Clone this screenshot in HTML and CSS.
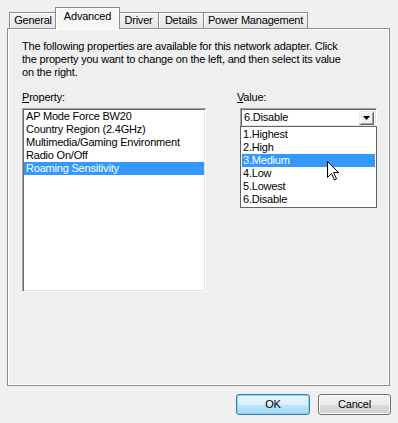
FILE: index.html
```html
<!DOCTYPE html>
<html>
<head>
<meta charset="utf-8">
<link rel="stylesheet" href="styles.css">
</head>
<body>
<div class="dialog">
  <div class="tabs">
    <div class="tab t-general">General</div>
    <div class="tab active t-advanced">Advanced</div>
    <div class="tab t-driver">Driver</div>
    <div class="tab t-details">Details</div>
    <div class="tab t-power">Power Management</div>
  </div>
  <div class="panel">
    <p class="desc">The following properties are available for this network adapter. Click<br>the property you want to change on the left, and then select its value<br>on the right.</p>
    <div class="columns">
      <div class="col-left">
        <div class="label"><u>P</u>roperty:</div>
        <div class="listbox">
          <div class="item">AP Mode Force BW20</div>
          <div class="item">Country Region (2.4GHz)</div>
          <div class="item">Multimedia/Gaming Environment</div>
          <div class="item">Radio On/Off</div>
          <div class="item selected">Roaming Sensitivity</div>
        </div>
      </div>
      <div class="col-right">
        <div class="label"><u>V</u>alue:</div>
        <div class="combo">
          <div class="combo-text">6.Disable</div>
          <div class="combo-btn">
            <svg width="7" height="4" viewBox="0 0 7 4"><path d="M0 0H7L3.5 4Z" fill="#000"/></svg>
          </div>
          <div class="dropdown">
            <div class="ditem">1.Highest</div>
            <div class="ditem">2.High</div>
            <div class="ditem selected">3.Medium</div>
            <div class="ditem">4.Low</div>
            <div class="ditem">5.Lowest</div>
            <div class="ditem">6.Disable</div>
          </div>
          <svg class="cursor" width="13" height="20" viewBox="0 0 13 20"><path d="M0.5 0.5V16.5L4.5 12.5L7.5 19L9.5 18L6.6 11.5H11.5Z" fill="#fff" stroke="#000" stroke-width="1" stroke-linejoin="miter"/></svg>
        </div>
      </div>
    </div>
  </div>
  <div class="buttons">
    <div class="btn default">OK</div>
    <div class="btn">Cancel</div>
  </div>
</div>
</body>
</html>
```
FILE: styles.css
```css
html, body {
  margin: 0;
  padding: 0;
  background: #f0f0f0;
}
body {
  font-family: "Liberation Sans", Arial, sans-serif;
  font-size: 11px;
  letter-spacing: -0.2px;
  color: #000;
  width: 398px;
  height: 423px;
  overflow: hidden;
}
.dialog {
  padding: 7px 8px 0 7px;
}
.tabs {
  display: flex;
  align-items: flex-end;
  height: 21px;
  padding-left: 2px;
}
.tab {
  box-sizing: border-box;
  height: 16px;
  border: 1px solid #898c95;
  border-bottom: none;
  margin-right: -1px;
  text-align: center;
  line-height: 15px;
  background: linear-gradient(#f4f4f4, #e6e6e6);
  box-shadow: inset 1px 1px 0 #fff;
  white-space: nowrap;
}
.t-general { width: 48px; }
.t-advanced { width: 65px; }
.t-driver { width: 41px; }
.t-details { width: 46px; }
.t-power { width: 105px; }
.tab.active {
  height: 22px;
  margin-bottom: -1px;
  margin-left: -1px;
  margin-right: -2px;
  position: relative;
  z-index: 1;
  background: #f6f6f6;
  line-height: 16px;
  box-shadow: inset 1px 1px 0 #fff;
}
.panel {
  box-sizing: border-box;
  height: 358px;
  width: 383px;
  border: 1px solid #898c95;
  box-shadow: inset 1px 1px 0 #fff, inset -1px -1px 0 #fff;
  background: #efefef;
  padding: 11px 10px 0 14px;
}
.desc {
  margin: 0;
  line-height: 13px;
  width: 355px;
  white-space: nowrap;
}
.columns {
  display: flex;
  margin-top: 12px;
}
.col-left {
  width: 184px;
}
.col-right {
  margin-left: 31px;
  width: 140px;
}
.label {
  line-height: 13px;
  height: 17px;
}
.listbox {
  box-sizing: border-box;
  height: 184px;
  border: 1px solid;
  border-color: #a0a0a0 #ffffff #ffffff #a0a0a0;
  box-shadow: inset 1px 1px 0 #696969, inset -1px -1px 0 #e3e3e3;
  background: #fff;
  padding: 1px 1px;
}
.item {
  height: 13px;
  line-height: 13px;
  padding-left: 2px;
  white-space: nowrap;
}
.selected {
  background: #3399ff;
  color: #fff;
}
.combo {
  position: relative;
  box-sizing: border-box;
  margin-left: 3px;
  width: 137px;
  height: 19px;
  border: 1px solid;
  border-color: #a0a0a0 #ffffff #ffffff #a0a0a0;
  box-shadow: inset 1px 1px 0 #696969, inset -1px -1px 0 #e3e3e3;
  background: #fff;
  display: flex;
  align-items: center;
  padding: 0 2px 0 3px;
}
.combo-text {
  flex: 1;
  line-height: 13px;
}
.combo-btn {
  box-sizing: border-box;
  width: 15px;
  height: 14px;
  border: 1px solid;
  border-color: #f0f0f0 #696969 #696969 #f0f0f0;
  box-shadow: inset 1px 1px 0 #fff, inset -1px -1px 0 #a0a0a0;
  background: #f0f0f0;
  display: flex;
  align-items: center;
  justify-content: center;
  margin-top: 1px;
}
.dropdown {
  position: absolute;
  left: -1px;
  top: 17px;
  width: 137px;
  box-sizing: border-box;
  border: 1px solid #646464;
  background: #fff;
  padding: 1px 1px;
  z-index: 2;
}
.ditem {
  height: 13px;
  line-height: 13px;
  padding-left: 1px;
}
.cursor {
  position: absolute;
  left: 86px;
  top: 52px;
  z-index: 3;
}
.buttons {
  display: flex;
  justify-content: flex-end;
  gap: 8px;
  margin-top: 8px;
  padding-right: 0;
  width: 384px;
}
.btn {
  box-sizing: border-box;
  width: 73px;
  height: 21px;
  border: 1px solid #707070;
  border-radius: 3px;
  background: linear-gradient(#f2f2f2 0%, #ebebeb 50%, #dddddd 50%, #cfcfcf 100%);
  box-shadow: inset 0 0 0 1px #fcfcfc;
  text-align: center;
  line-height: 19px;
}
.btn.default {
  width: 74px;
  border-color: #3c7fb1;
  background: linear-gradient(#eaf6fd 0%, #d9f0fc 50%, #bee6fd 50%, #a7d9f5 100%);
  box-shadow: inset 0 0 0 1px #7ed3f7, 0 0 1px #9fd9f3;
}
```
